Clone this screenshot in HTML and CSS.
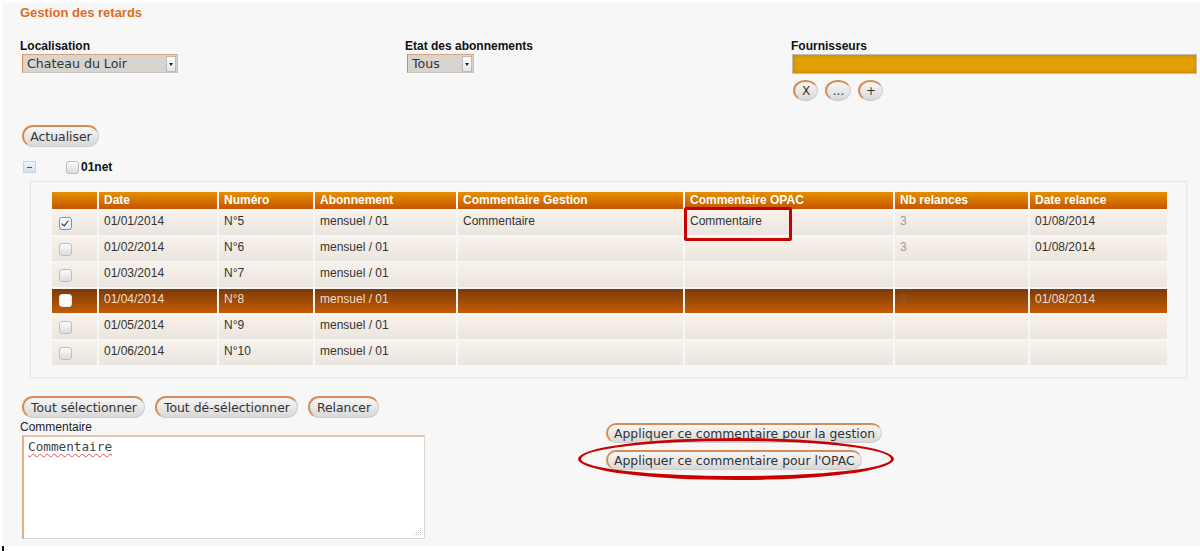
FILE: index.html
```html
<!DOCTYPE html>
<html lang="fr">
<head>
<meta charset="utf-8">
<title>Gestion des retards</title>
<link rel="stylesheet" href="styles.css">
</head>
<body>
<div class="panel">
  <h1 class="title">Gestion des retards</h1>
  <div class="filters">
    <div class="filter f-loc">
      <label class="flabel">Localisation</label>
      <div class="select sel-loc"><span class="sel-text">Chateau du Loir</span><span class="sel-arrow"></span></div>
    </div>
    <div class="filter f-etat">
      <label class="flabel">Etat des abonnements</label>
      <div class="select sel-etat"><span class="sel-text">Tous</span><span class="sel-arrow"></span></div>
    </div>
    <div class="filter f-four">
      <label class="flabel">Fournisseurs</label>
      <div class="four-bar"></div>
      <div class="four-btns">
        <button class="btn btn-round">X</button>
        <button class="btn btn-round btn-dots">...</button>
        <button class="btn btn-round">+</button>
      </div>
    </div>
  </div>
  <button class="btn btn-refresh">Actualiser</button>
  <div class="group">
    <span class="toggle"></span>
    <span class="cb"></span>
    <span class="group-name">01net</span>
  </div>
  <div class="table-box">
    <table class="grid">
      <colgroup>
        <col class="c-cb"><col class="c-date"><col class="c-num"><col class="c-abo"><col class="c-cg"><col class="c-co"><col class="c-nb"><col class="c-dr">
      </colgroup>
      <thead>
        <tr><th></th><th>Date</th><th>Numéro</th><th>Abonnement</th><th>Commentaire Gestion</th><th>Commentaire OPAC</th><th>Nb relances</th><th>Date relance</th></tr>
      </thead>
      <tbody>
        <tr><td class="td-cb"><span class="cb cb-checked"></span></td><td>01/01/2014</td><td>N°5</td><td>mensuel / 01</td><td>Commentaire</td><td class="td-annot">Commentaire<span class="annot-rect"></span></td><td class="nb">3</td><td>01/08/2014</td></tr>
        <tr><td class="td-cb"><span class="cb"></span></td><td>01/02/2014</td><td>N°6</td><td>mensuel / 01</td><td></td><td></td><td class="nb">3</td><td>01/08/2014</td></tr>
        <tr><td class="td-cb"><span class="cb"></span></td><td>01/03/2014</td><td>N°7</td><td>mensuel / 01</td><td></td><td></td><td></td><td></td></tr>
        <tr class="selected"><td class="td-cb"><span class="cb cb-white"></span></td><td>01/04/2014</td><td>N°8</td><td>mensuel / 01</td><td></td><td></td><td class="nb">3</td><td>01/08/2014</td></tr>
        <tr><td class="td-cb"><span class="cb"></span></td><td>01/05/2014</td><td>N°9</td><td>mensuel / 01</td><td></td><td></td><td></td><td></td></tr>
        <tr><td class="td-cb"><span class="cb"></span></td><td>01/06/2014</td><td>N°10</td><td>mensuel / 01</td><td></td><td></td><td></td><td></td></tr>
      </tbody>
    </table>
  </div>
  <div class="bottom">
    <div class="bottom-left">
      <div class="actions">
        <button class="btn btn-act">Tout sélectionner</button>
        <button class="btn btn-act">Tout dé-sélectionner</button>
        <button class="btn btn-act">Relancer</button>
      </div>
      <div class="comment-label">Commentaire</div>
      <div class="textarea"><span class="spell">Commentaire</span>
        <svg class="grip" width="8" height="8" viewBox="0 0 8 8"><g fill="#b8b8b8"><rect x="6" y="0" width="1" height="1"/><rect x="4" y="2" width="1" height="1"/><rect x="6" y="2" width="1" height="1"/><rect x="2" y="4" width="1" height="1"/><rect x="4" y="4" width="1" height="1"/><rect x="6" y="4" width="1" height="1"/><rect x="0" y="6" width="1" height="1"/><rect x="2" y="6" width="1" height="1"/><rect x="4" y="6" width="1" height="1"/><rect x="6" y="6" width="1" height="1"/></g></svg>
      </div>
    </div>
    <div class="bottom-right">
      <button class="btn btn-apply">Appliquer ce commentaire pour la gestion</button>
      <div class="apply-wrap">
        <button class="btn btn-apply">Appliquer ce commentaire pour l'OPAC</button>
        <span class="annot-ellipse"></span>
      </div>
    </div>
  </div>
</div>
<div class="caret"></div>
</body>
</html>
```
FILE: styles.css
```css
html, body {
  margin: 0;
  background: #fff;
}
body {
  font-family: "Liberation Sans", Arial, sans-serif;
  font-size: 12px;
  color: #222;
}
.panel {
  margin: 3px 0 0 3px;
  background: #f7f7f7;
  padding: 2px 0 7px 17px;
}
.title {
  margin: 0;
  font-size: 13px;
  line-height: 15px;
  font-weight: bold;
  color: #df6c1e;
}
.filters {
  display: flex;
  margin-top: 19px;
}
.f-loc { width: 385px; }
.f-etat { width: 386px; }
.f-four { flex: 1; }
.flabel {
  display: block;
  font-weight: bold;
  line-height: 14px;
  color: #111;
  margin-bottom: 1px;
}
.select {
  display: flex;
  align-items: center;
  margin-left: 2px;
  height: 19px;
  box-sizing: border-box;
  background: #d8d4d0;
  border: 1px solid #c9c4bf;
  border-left-color: #d78a4f;
  border-top-color: #dba37b;
  font-family: "DejaVu Sans", sans-serif;
  font-size: 12.6px;
  color: #333;
}
.sel-loc { width: 156px; }
.sel-etat { width: 67px; }
.sel-text {
  flex: 1;
  padding-left: 4px;
  line-height: 17px;
}
.sel-arrow {
  width: 10px;
  height: 16px;
  margin-right: 1px;
  background: linear-gradient(#ffffff, #e4e4e4);
  border: 1px solid #bbb;
  box-sizing: border-box;
  position: relative;
}
.sel-arrow::after {
  content: "";
  position: absolute;
  left: 2px;
  top: 6px;
  border-left: 2px solid transparent;
  border-right: 2px solid transparent;
  border-top: 3px solid #222;
}
.four-bar {
  margin: 0 3px 0 1px;
  height: 20px;
  box-sizing: border-box;
  border: 1px solid #c2bcb2;
  background: #e1a200;
  box-shadow: inset 0 0 5px #cc7a00;
}
.four-btns {
  display: flex;
  gap: 7px;
  margin-top: 6px;
  margin-left: 2px;
}
.btn {
  font-family: "DejaVu Sans", sans-serif;
  font-size: 12.4px;
  color: #333;
  background: linear-gradient(#f7f7f7, #d8d8d8);
  border: 1px solid #cdcdcd;
  border-top: 2px solid #d68c54;
  border-left: 2px solid #d68c54;
  border-radius: 11px;
  box-sizing: border-box;
  height: 22px;
  padding: 0 6px;
  margin: 0;
  line-height: 17px;
  cursor: pointer;
}
.btn-round {
  width: 25px;
  height: 21px;
  padding: 0;
  border-radius: 50%;
  font-size: 12px;
}
.btn-dots { width: 26px; }
.btn-refresh {
  display: block;
  margin: 24px 0 0 2px;
  width: 77px;
}
.group {
  display: flex;
  align-items: center;
  margin-top: 13px;
  height: 14px;
}
.toggle {
  margin-left: 3px;
  width: 13px;
  height: 12px;
  box-sizing: border-box;
  border: 1px solid #c9d6e3;
  background: linear-gradient(#eef3f8, #d6e1ec);
  position: relative;
}
.toggle::after {
  content: "";
  position: absolute;
  left: 3px;
  top: 5px;
  width: 5px;
  height: 1px;
  background: #555;
}
.cb {
  display: inline-block;
  width: 13px;
  height: 13px;
  box-sizing: border-box;
  border: 1px solid #bdbdbd;
  border-radius: 3px;
  background: linear-gradient(#fbfbfb, #dcdcdc);
  vertical-align: top;
}
.group .cb { margin-left: 30px; }
.group-name {
  margin-left: 2px;
  font-weight: bold;
  color: #111;
}
.cb-checked {
  border-color: #5a9bd8;
  background: linear-gradient(#ffffff, #e6eef6);
  position: relative;
}
.cb-checked::after {
  content: "";
  position: absolute;
  left: 3px;
  top: 1px;
  width: 3px;
  height: 6px;
  border-right: 1.5px solid #222;
  border-bottom: 1.5px solid #222;
  transform: rotate(40deg);
}
.cb-white {
  background: #fafafa;
  border-color: #e6e6e6;
}
.table-box {
  margin: 7px 0 0 10px;
  width: 1157px;
  box-sizing: border-box;
  border: 1px solid #e6e6e6;
  box-shadow: 0 0 2px rgba(0, 0, 0, 0.06);
  padding: 8px 0 10px 19px;
}
.grid {
  border-collapse: separate;
  border-spacing: 2px;
  table-layout: fixed;
  width: 1119px;
}
.c-cb { width: 45px; }
.c-date { width: 118px; }
.c-num { width: 94px; }
.c-abo { width: 141px; }
.c-cg { width: 225px; }
.c-co { width: 208px; }
.c-nb { width: 133px; }
.c-dr { width: 137px; }
.grid thead tr { height: 17px; }
.grid th {
  padding: 0 5px;
  text-align: left;
  font-weight: bold;
  color: #fff;
  line-height: 17px;
  background: linear-gradient(#e49000, #c75500);
  white-space: nowrap;
  overflow: hidden;
}
.grid tbody tr { height: 24px; }
.grid td {
  padding: 3px 5px 0;
  vertical-align: top;
  line-height: 14px;
  color: #333;
  background: linear-gradient(#f7f1ea, #ebe5df);
  white-space: nowrap;
}
.grid td.td-cb { padding-left: 7px; }
.td-cb .cb { margin-top: 3px; }
.grid td.nb { color: #9a9a9a; }
.grid tr.selected td {
  background: linear-gradient(#7a3a0b, #c35c02);
  color: #f1dfcd;
}
.grid tr.selected td.nb { color: #985626; }
.grid tr.selected .cb { margin-top: 2px; }
.td-annot { position: relative; }
.annot-rect {
  position: absolute;
  left: -1px;
  top: -4px;
  width: 108px;
  height: 34px;
  box-sizing: border-box;
  border: 3px solid #c90000;
  border-radius: 2px;
}
.bottom {
  display: flex;
  margin-top: 18px;
}
.bottom-left { width: 586px; }
.actions {
  display: flex;
  gap: 10px;
  margin-left: 2px;
}
.btn-act { padding: 0 7px; }
.comment-label {
  margin-top: 2px;
  line-height: 14px;
  color: #222;
}
.textarea {
  position: relative;
  margin: 1px 0 0 2px;
  width: 403px;
  height: 104px;
  box-sizing: border-box;
  background: #fff;
  border: 1px solid #dcd6d0;
  border-left: 2px solid #e8ab7e;
  border-top: 2px solid #e3c6ad;
  padding: 2px 4px;
  font-family: "DejaVu Sans Mono", monospace;
  font-size: 12.7px;
  line-height: 15px;
  color: #444;
}
.spell {
  text-decoration: underline wavy #e05050;
  text-decoration-thickness: 1px;
  text-underline-offset: 2px;
}
.grip {
  position: absolute;
  right: 2px;
  bottom: 2px;
}
.bottom-right {
  padding-top: 27px;
  display: flex;
  flex-direction: column;
  align-items: flex-start;
  gap: 7px;
}
.btn-apply {
  height: 20px;
  padding: 0 6px;
  line-height: 16px;
}
.apply-wrap { position: relative; }
.annot-ellipse {
  position: absolute;
  left: -28px;
  top: -12px;
  width: 316px;
  height: 42px;
  box-sizing: border-box;
  border: 3px solid #c80000;
  border-bottom-width: 4px;
  border-radius: 50%;
  pointer-events: none;
}
.caret {
  width: 2px;
  height: 5px;
  margin-left: 2px;
  background: #111;
}
```
